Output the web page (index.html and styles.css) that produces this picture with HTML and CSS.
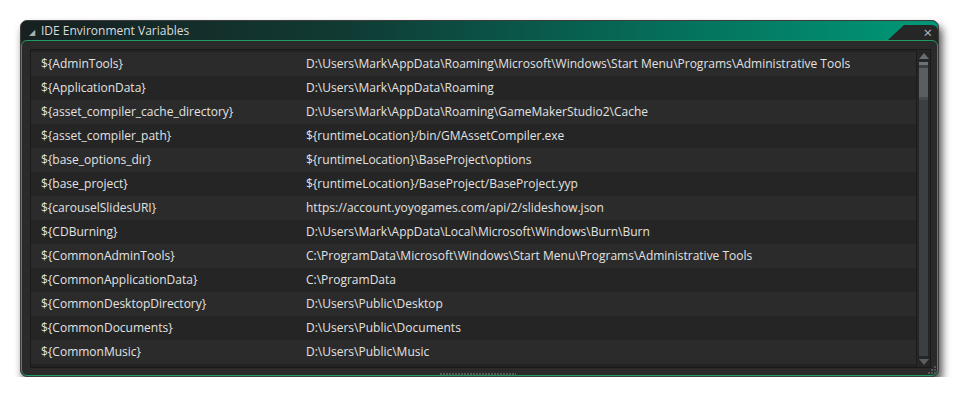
FILE: index.html
```html
<!DOCTYPE html>
<html lang="en">
<head>
  <meta charset="UTF-8">
  <title>IDE Environment Variables</title>
  <link rel="stylesheet" href="styles.css">
</head>
<body>
  <div class="window">
    <!-- Barra de título -->
    <div class="titlebar">
      <span class="collapse">&#9698;</span>
      <span class="title">IDE Environment Variables</span>
      <span class="close-tab">&#215;</span>
    </div>

    <div class="panel">
      <div class="list">
        <div class="rows">
          <div class="row"><span>${AdminTools}</span><span>D:\Users\Mark\AppData\Roaming\Microsoft\Windows\Start Menu\Programs\Administrative Tools</span></div>
          <div class="row"><span>${ApplicationData}</span><span>D:\Users\Mark\AppData\Roaming</span></div>
          <div class="row"><span>${asset_compiler_cache_directory}</span><span>D:\Users\Mark\AppData\Roaming\GameMakerStudio2\Cache</span></div>
          <div class="row"><span>${asset_compiler_path}</span><span>${runtimeLocation}/bin/GMAssetCompiler.exe</span></div>
          <div class="row"><span>${base_options_dir}</span><span>${runtimeLocation}\BaseProject\options</span></div>
          <div class="row"><span>${base_project}</span><span>${runtimeLocation}/BaseProject/BaseProject.yyp</span></div>
          <div class="row"><span>${carouselSlidesURI}</span><span>https://account.yoyogames.com/api/2/slideshow.json</span></div>
          <div class="row"><span>${CDBurning}</span><span>D:\Users\Mark\AppData\Local\Microsoft\Windows\Burn\Burn</span></div>
          <div class="row"><span>${CommonAdminTools}</span><span>C:\ProgramData\Microsoft\Windows\Start Menu\Programs\Administrative Tools</span></div>
          <div class="row"><span>${CommonApplicationData}</span><span>C:\ProgramData</span></div>
          <div class="row"><span>${CommonDesktopDirectory}</span><span>D:\Users\Public\Desktop</span></div>
          <div class="row"><span>${CommonDocuments}</span><span>D:\Users\Public\Documents</span></div>
          <div class="row"><span>${CommonMusic}</span><span>D:\Users\Public\Music</span></div>
        </div>

        <!-- Barra de rolagem -->
        <div class="scrollbar">
          <span class="arrow up"></span>
          <div class="track"><div class="thumb"></div></div>
          <span class="arrow down"></span>
        </div>
      </div>
      <div class="grip"></div>
      <svg class="corner" width="8" height="8" viewBox="0 0 8 8">
        <rect x="6" y="0" width="2" height="2" fill="#555"/>
        <rect x="3" y="3" width="2" height="2" fill="#555"/>
        <rect x="6" y="3" width="2" height="2" fill="#555"/>
        <rect x="0" y="6" width="2" height="2" fill="#555"/>
        <rect x="3" y="6" width="2" height="2" fill="#555"/>
        <rect x="6" y="6" width="2" height="2" fill="#555"/>
      </svg>
    </div>
  </div>
</body>
</html>
```

FILE: styles.css
```css
* {
  box-sizing: border-box;
  margin: 0;
  padding: 0;
}

body {
  background: #ffffff;
  font-family: 'Open Sans', 'Noto Sans', sans-serif;
  font-size: 12px;
  color: #e2e2e2;
}

.window {
  width: 919px;
  height: 357px;
  margin: 20px 0 0 20px;
  display: flex;
  flex-direction: column;
  background: #262626;
  border: 1px solid #3c3c3c;
  border-radius: 7px;
  box-shadow: 3px 6px 9px rgba(0, 0, 0, 0.7);
}

/* Barra de título com degradê verde */
.titlebar {
  height: 19px;
  display: flex;
  align-items: flex-end;
  background: linear-gradient(90deg, #182020 0%, #103a33 35%, #056e5a 70%, #009878 100%);
  border-radius: 6px 6px 0 0;
}

.collapse {
  font-size: 8px;
  color: #a8b0ae;
  width: 20px;
  padding-left: 8px;
  align-self: center;
  margin-top: 1px;
}

.title {
  align-self: center;
  color: #dcdcdc;
  line-height: 19px;
}

.close-tab {
  margin-left: auto;
  width: 50px;
  height: 15px;
  background: #262626;
  clip-path: polygon(16px 0, 100% 0, 100% 100%, 0 100%);
  color: #b9bcc0;
  font-size: 15px;
  line-height: 14px;
  text-align: right;
  padding-right: 6px;
  border-top-right-radius: 6px;
}

.panel {
  flex: 1;
  position: relative;
  display: flex;
  flex-direction: column;
  background: #2a2a2a;
  border: 1px solid #1f9a64;
  border-radius: 6px;
  padding: 8px 6px 0 8px;
}

.list {
  height: 319px;
  display: flex;
  background: #222222;
  border: 1px solid #1a1a1a;
}

.rows {
  flex: 1;
  padding-top: 2px;
  overflow: hidden;
}

.row {
  display: grid;
  grid-template-columns: 265px 1fr;
  height: 24px;
  line-height: 23px;
  background: #2b2b2b;
  white-space: nowrap;
}

.row:nth-child(even) {
  background: #252525;
}

.row span {
  padding-left: 10px;
}

.scrollbar {
  width: 14px;
  display: flex;
  flex-direction: column;
  align-items: center;
  padding: 3px 0 2px;
  background: #262626;
  border-left: 1px solid #1c1c1c;
}

.arrow {
  width: 0;
  height: 0;
  border-left: 5px solid transparent;
  border-right: 5px solid transparent;
}

.arrow.up {
  border-bottom: 6px solid #6a6e72;
  margin-bottom: 3px;
}

.arrow.down {
  border-top: 6px solid #5a5e62;
  margin-top: 3px;
}

.track {
  flex: 1;
  width: 9px;
  background: #3a3f44;
}

.thumb {
  height: 38px;
  background: #5a5e62;
  border-top: 3px solid #6e7276;
  border-bottom: 3px solid #464a4e;
  box-shadow: inset 0 3px 0 #3a3f44;
}

/* Alça de redimensionamento */
.grip {
  align-self: center;
  width: 76px;
  height: 2px;
  margin-top: 5px;
  margin-left: -6px;
  background: repeating-linear-gradient(90deg, #555 0 2px, transparent 2px 3px);
}

.corner {
  position: absolute;
  right: 1px;
  bottom: 1px;
}
```
